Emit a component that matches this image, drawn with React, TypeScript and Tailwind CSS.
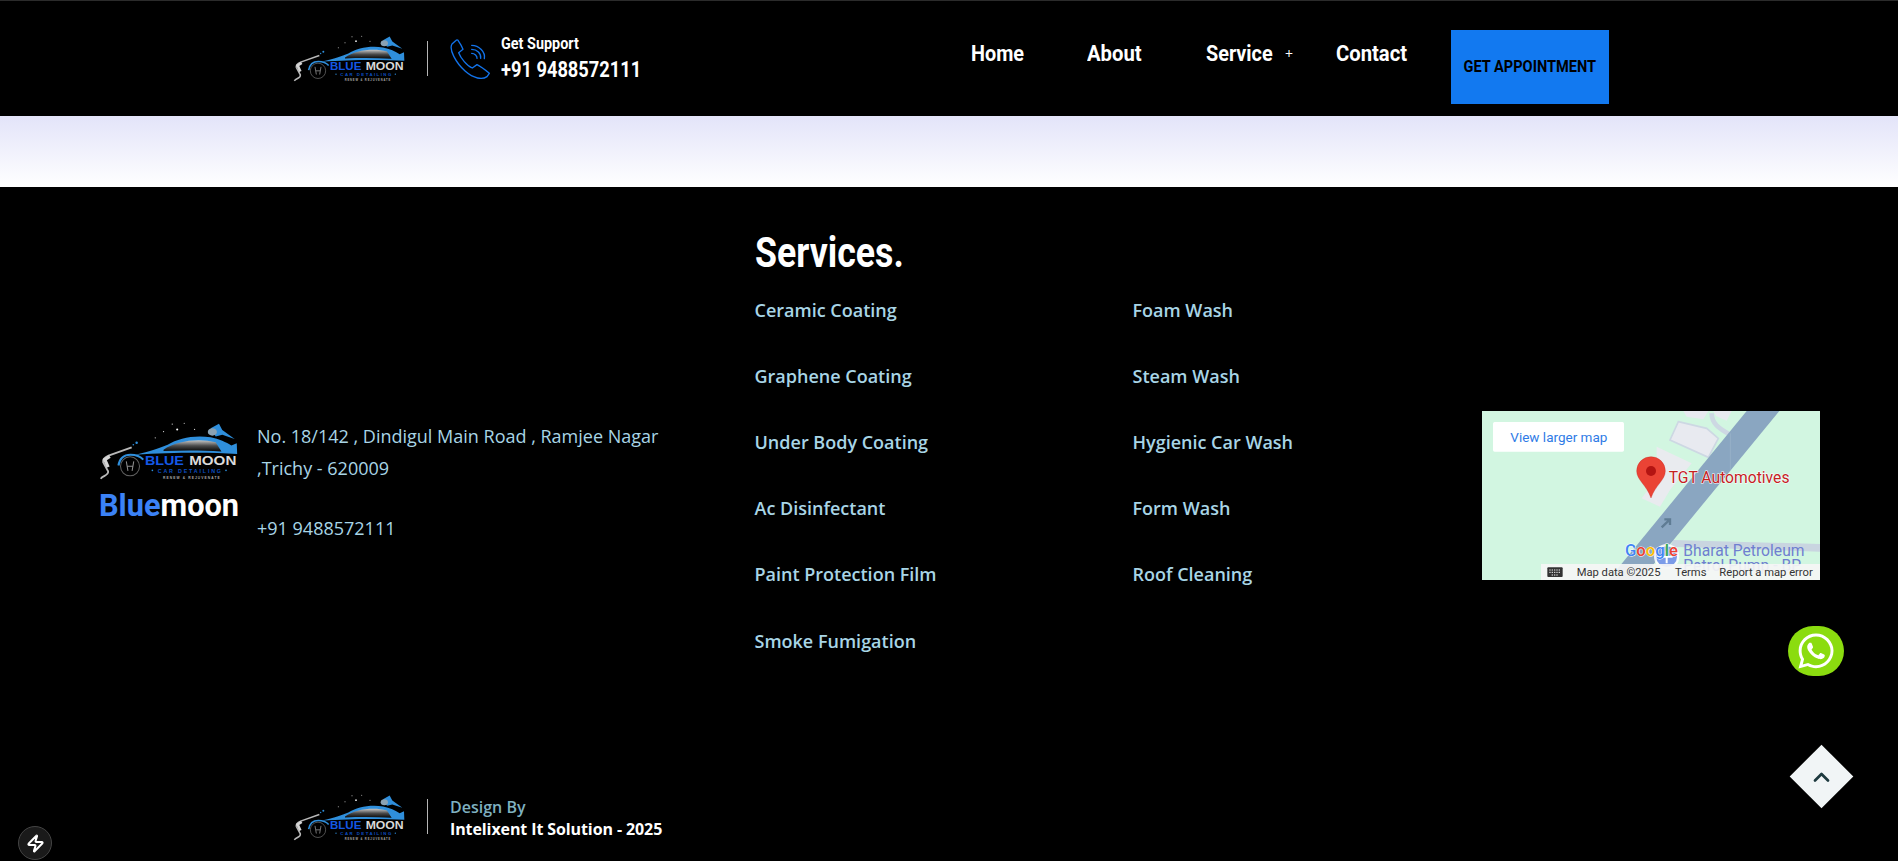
import { ChevronUp, Zap } from "lucide-react";
import { FaWhatsapp } from "react-icons/fa";

const leftServices = [
  "Ceramic Coating",
  "Graphene Coating",
  "Under Body Coating",
  "Ac Disinfectant",
  "Paint Protection Film",
  "Smoke Fumigation",
];
const rightServices = ["Foam Wash", "Steam Wash", "Hygienic Car Wash", "Form Wash", "Roof Cleaning"];

// no Rajdhani here, so Roboto squeezed sideways stands in for the heading face
const headingFont = "font-['Roboto',sans-serif] inline-block origin-left whitespace-nowrap";

function Logo({ className }: { className: string }) {
  return (
    <svg viewBox="70 103 336 140" className={className}>
      <defs>
        <linearGradient id="roof" x1="0" y1="0" x2="0" y2="1">
          <stop offset="0" stopColor="#c9c9c9" />
          <stop offset="0.5" stopColor="#4a4a4a" />
          <stop offset="1" stopColor="#050505" />
        </linearGradient>
      </defs>
      {/* pressure gun */}
      <path d="M149 164 L93 184 C84 188 78 192 80 200 L92 222 C94 232 80 232 74 240" fill="none" stroke="#b8b8b8" strokeWidth="4.5" />
      <path d="M96 186 L84 194 L92 212" fill="none" stroke="#d5d5d5" strokeWidth="8" />
      {/* wheel arch and wheel */}
      <path d="M117 208 C120 190 132 182 146 182 C158 182 170 186 177 194" fill="none" stroke="#2f8fdc" strokeWidth="5" />
      <circle cx="145" cy="210" r="23" fill="none" stroke="#5f5f5f" strokeWidth="2.5" />
      <path d="M136 198 L140 221 M154 198 L150 221 M139 210 H151" stroke="#8d8d8d" strokeWidth="2.5" fill="none" />
      {/* car body */}
      <path d="M157 182 C195 174 215 166 236 158 C262 142 300 134 340 140 C360 144 378 152 390 160 L403 154 L404 180 C340 176 250 176 157 182 Z" fill="#2f8fdc" />
      <path d="M226 170 C256 148 312 141 352 152 L366 174 C320 171 270 171 226 173 Z" fill="url(#roof)" />
      {/* polisher */}
      <path d="M340 118 L360 107 L368 122 L398 144 L368 134 L352 138 Z" fill="#2f8fdc" />
      <ellipse cx="344" cy="127" rx="11" ry="9" fill="#8aa2b4" />
      {/* droplets and stars */}
      <circle cx="161" cy="153" r="3" fill="#2f8fdc" />
      <circle cx="153" cy="158" r="2" fill="#2f8fdc" />
      <circle cx="259" cy="121" r="2.5" fill="#ffffff" />
      <circle cx="226" cy="126" r="1.5" fill="#dddddd" />
      <circle cx="247" cy="108" r="1.5" fill="#dddddd" />
      <circle cx="276" cy="106" r="1.5" fill="#bbbbbb" />
      <circle cx="301" cy="121" r="1.5" fill="#cccccc" />
      <circle cx="206" cy="141" r="1.5" fill="#cccccc" />
      <text x="181" y="208" textLength="94" lengthAdjust="spacingAndGlyphs" fontFamily="Liberation Sans, sans-serif" fontWeight="700" fontSize="31" fill="#1458e6">
        BLUE
      </text>
      <text x="288" y="208" textLength="114" lengthAdjust="spacingAndGlyphs" fontFamily="Liberation Sans, sans-serif" fontWeight="700" fontSize="31" fill="#dadada">
        MOON
      </text>
      <text x="212" y="225" textLength="153" lengthAdjust="spacing" fontFamily="Liberation Sans, sans-serif" fontWeight="700" fontSize="13" fill="#0c4fc4">
        CAR DETAILING
      </text>
      <circle cx="199" cy="220" r="2" fill="#2f8fdc" />
      <circle cx="377" cy="220" r="2" fill="#2f8fdc" />
      <text x="225" y="241" textLength="137" lengthAdjust="spacing" fontFamily="Liberation Sans, sans-serif" fontWeight="700" fontSize="8" fill="#aaaaaa">
        RENEW &amp; REJUVENATE
      </text>
    </svg>
  );
}

function PhoneIcon() {
  return (
    <svg viewBox="536 106 126 126" className="w-[42px] h-[42px] ml-[21px]" fill="none" stroke="#1273eb" strokeWidth="4" strokeLinejoin="round" strokeLinecap="round">
      <path d="M556 114 L545 124 C535 140 556 180 585 206 C610 228 636 232 650 222 L657 212 C645 202 632 192 620 186 L606 196 C590 190 571 166 565 150 L578 140 C574 130 568 120 563 113 C561 111 558 112 556 114 Z" />
      <path d="M604 128 C626 128 646 148 642 168" />
      <path d="M604 140 C620 140 633 152 631 167" />
      <path d="M604 152 C613 152 621 160 620 167" />
    </svg>
  );
}

function MapCard() {
  return (
    <svg viewBox="36 33 1014 507" className="w-[338px] h-[169px] shrink-0">
      <rect x="36" y="33" width="1014" height="507" fill="#d2f6e1" />
      {/* buildings */}
      <path d="M725 40 C725 70 745 85 782 105" fill="none" stroke="#cdd8e3" strokeWidth="14" />
      <path d="M640 33 L715 33 L700 58 L650 50 Z" fill="#e8eaf0" />
      <path d="M730 33 L785 33 L770 62 L738 48 Z" fill="#e8eaf0" />
      <path d="M625 65 L710 85 L745 115 L715 172 L600 120 Z" fill="#e8eaf0" stroke="#cdd8e3" strokeWidth="5" />
      <path d="M560 140 L665 190 L600 270 L570 320 L515 295 L560 235 Z" fill="#e9ebef" />
      <path d="M610 420 L1050 432 L1050 455 L600 440 Z" fill="#c9d5e0" />
      {/* road */}
      <path d="M830 33 L928 33 L512 540 L415 540 Z" fill="#8aa6c1" />
      <path d="M781 100 V210" stroke="#a3bacf" strokeWidth="1.5" />
      <path d="M575 382 L600 358 M583 358 L600 358 L600 375" stroke="#5f7c94" strokeWidth="7" fill="none" />
      {/* marker */}
      <path d="M543 294 C530 255 500 240 500 213 A43 43 0 0 1 586 213 C586 240 556 255 543 294 Z" fill="#ea4335" stroke="#c5221f" strokeWidth="1" />
      <circle cx="543" cy="213" r="15" fill="#b31412" />
      <text x="596" y="248" fontFamily="Roboto, sans-serif" fontSize="47" fill="#c5221f" stroke="#ffffff" strokeWidth="3" paintOrder="stroke">
        TGT Automotives
      </text>
      {/* petrol pump */}
      <circle cx="590" cy="470" r="38" fill="#ffffff" opacity="0.85" />
      <circle cx="590" cy="470" r="31" fill="#7b9be8" />
      <path d="M590 452 V490 M572 470 H608" stroke="#ffffff" strokeWidth="6" />
      <text x="640" y="467" fontFamily="Roboto, sans-serif" fontSize="47" fill="#6f7fd0">
        Bharat Petroleum
      </text>
      <text x="640" y="512" fontFamily="Roboto, sans-serif" fontSize="47" fill="#6f7fd0">
        Petrol Pump - BP
      </text>
      <text x="465" y="467" fontFamily="Roboto, sans-serif" fontSize="50" fontWeight="500" stroke="#ffffff" strokeWidth="3" paintOrder="stroke">
        <tspan fill="#4285f4">G</tspan>
        <tspan fill="#ea4335">o</tspan>
        <tspan fill="#fbbc05">o</tspan>
        <tspan fill="#4285f4">g</tspan>
        <tspan fill="#34a853">l</tspan>
        <tspan fill="#ea4335">e</tspan>
      </text>
      {/* attribution bar */}
      <rect x="213" y="492" width="837" height="48" fill="#f5f5f5" opacity="0.92" />
      <rect x="232" y="502" width="46" height="29" rx="3" fill="#333333" />
      <path d="M238 510 H272 M238 517 H272 M245 525 H265" stroke="#f5f5f5" strokeWidth="3" strokeDasharray="4 3" />
      <text x="320" y="528" fontFamily="Roboto, sans-serif" fontSize="33.6" fill="#333333">
        Map data ©2025
      </text>
      <text x="615" y="528" fontFamily="Roboto, sans-serif" fontSize="33.6" fill="#333333">
        Terms
      </text>
      <text x="748" y="528" fontFamily="Roboto, sans-serif" fontSize="33.6" fill="#333333">
        Report a map error
      </text>
      <rect x="69" y="66" width="393" height="89" rx="5" fill="#ffffff" />
      <text x="121" y="126" fontFamily="Roboto, sans-serif" fontSize="40.5" fill="#2f7be6">
        View larger map
      </text>
    </svg>
  );
}

function ServiceColumn({ items, className }: { items: string[]; className: string }) {
  return (
    <ul className={className}>
      {items.map((item) => (
        <li key={item} className="h-[66.2px] flex items-center text-[18px] font-semibold text-[#a8d5e6]">
          {item}
        </li>
      ))}
    </ul>
  );
}

export default function App() {
  return (
    <div className="relative h-[861px] overflow-hidden bg-black font-['Open_Sans',sans-serif]">
      {/* Header */}
      <header className="h-[116px] border-t border-[#2b2b2b] bg-black flex items-center pl-[293px] pr-[289px]">
        <Logo className="w-[112px] h-[47px]" />
        <div className="ml-[22px] w-px h-[35px] bg-[#b5b5b5]" />
        <PhoneIcon />
        <div className="ml-[10px] text-white font-bold">
          <p className="leading-[22px]">
            <span className={`${headingFont} text-[16px] scale-x-[0.9]`}>Get Support</span>
          </p>
          <p className="leading-[30px]">
            <span className={`${headingFont} text-[22px] scale-x-[0.83]`}>+91 9488572111</span>
          </p>
        </div>
        <nav className="ml-auto self-start mt-[29px] flex items-start text-white font-bold text-[22px] leading-[30px]">
          <a className="w-[116px] mt-[9px] flex items-center">
            <span className={`${headingFont} scale-x-[0.9]`}>Home</span>
          </a>
          <a className="w-[119px] mt-[9px] flex items-center">
            <span className={`${headingFont} scale-x-[0.92]`}>About</span>
          </a>
          <a className="w-[130px] mt-[9px] flex items-center">
            <span className={`${headingFont} scale-x-[0.9] w-[79px]`}>Service</span>
            <span className="font-normal text-[14px]">+</span>
          </a>
          <a className="w-[115px] mt-[9px] flex items-center">
            <span className={`${headingFont} scale-x-[0.92]`}>Contact</span>
          </a>
          <a className="w-[158px] h-[74px] bg-[#1279f0] text-black text-[16px] flex items-center justify-center">
            <span className="font-['Roboto',sans-serif] whitespace-nowrap scale-x-[0.91]">GET APPOINTMENT</span>
          </a>
        </nav>
      </header>

      {/* Strip between header and footer */}
      <div className="h-[71px] bg-gradient-to-b from-[#e3e4f9] to-white" />

      {/* Footer */}
      <footer className="bg-black">
        <div className="h-[593px] flex">
          <div className="w-[754.5px] shrink-0 pl-[99px] pt-[235px] flex">
            <div className="w-[158px]">
              <Logo className="w-[139px] h-[58px]" />
              <p className="mt-[4px] text-[32px] leading-[40px] font-bold text-white">
                <span className={`${headingFont} scale-x-[0.96]`}>
                  <span className="text-[#3b82f6]">Blue</span>moon
                </span>
              </p>
            </div>
            <div className="-mt-[2px] text-[18px] text-[#a8d5e6]">
              <p className="leading-[32px]">No. 18/142 , Dindigul Main Road , Ramjee Nagar</p>
              <p className="leading-[32px]">,Trichy - 620009</p>
              <p className="mt-[28px] leading-[32px]">+91 9488572111</p>
            </div>
          </div>

          <div className="w-[727.5px] shrink-0 pt-[40px]">
            <h2 className="text-[42px] leading-[48px] font-bold text-white">
              <span className={`${headingFont} scale-x-[0.85]`}>Services.</span>
            </h2>
            <div className="flex">
              <ServiceColumn items={leftServices} className="w-[378px]" />
              <ServiceColumn items={rightServices} className="w-[349.5px]" />
            </div>
          </div>

          <div className="pt-[224px]">
            <MapCard />
          </div>
        </div>

        <div className="h-[81px] pl-[293px] flex items-start">
          <Logo className="w-[112px] h-[47px] mt-[14px]" />
          <div className="ml-[22px] mt-[19px] w-px h-[35px] bg-[#b5b5b5]" />
          <div className="ml-[22px] mt-[16px] text-[16px] leading-[22px]">
            <p className="text-[#7fb1c0] font-semibold">Design By</p>
            <p className="text-white font-bold tracking-[-0.1px]">Intelixent It Solution - 2025</p>
          </div>
        </div>
      </footer>

      {/* Floating buttons */}
      <a className="absolute left-[1788px] top-[626px] w-[56px] h-[50px] rounded-full bg-[#8bdc0f] flex items-center justify-center text-white">
        <FaWhatsapp className="w-[40px] h-[40px]" />
      </a>
      <a className="absolute left-[1799px] top-[754px] w-[45px] h-[45px] rotate-45 bg-[#f1f5f6] flex items-center justify-center">
        <ChevronUp className="-rotate-45 w-[26px] h-[26px] text-[#1e3a3f]" strokeWidth={2.5} />
      </a>
      <div className="absolute left-[18px] top-[826px] w-[34px] h-[34px] rounded-full bg-[#1a1a1a] border border-[#444444] flex items-center justify-center">
        <Zap className="w-[19px] h-[21px] text-white" strokeWidth={2.5} />
      </div>
    </div>
  );
}
